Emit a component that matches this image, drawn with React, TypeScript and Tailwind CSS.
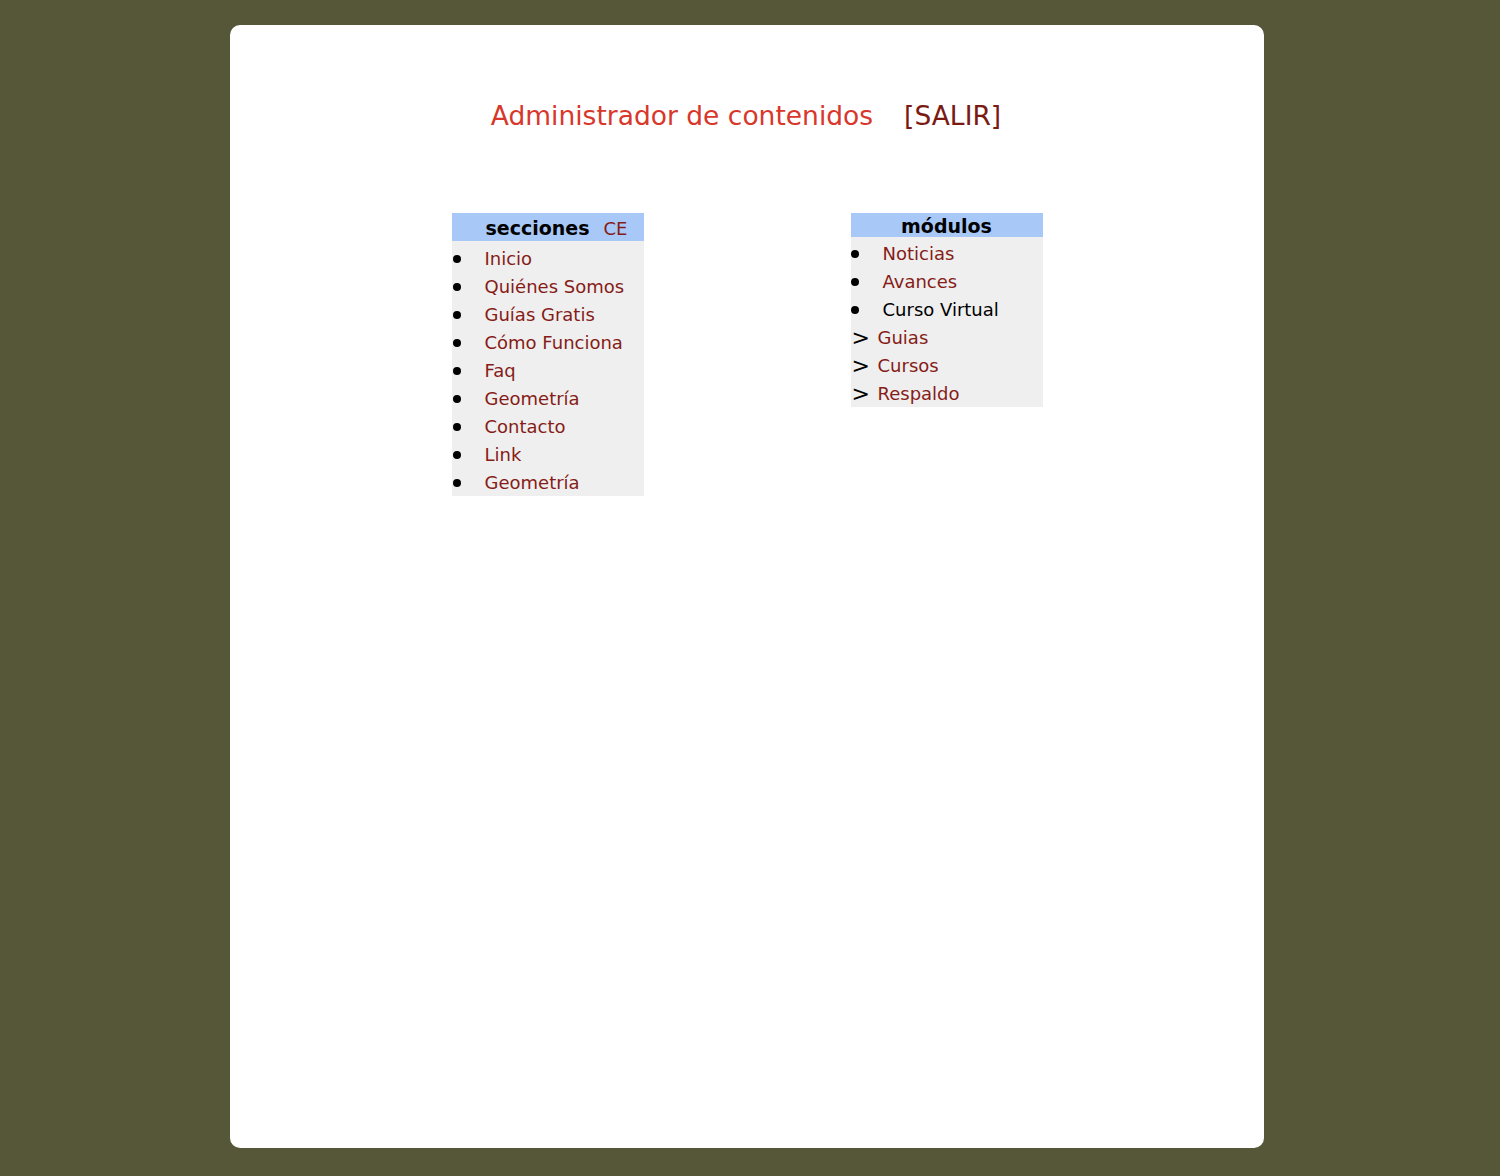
import React from "react";

const font = { fontFamily: '"DejaVu Sans", Verdana, sans-serif' };

function Bullet() {
  return <span className="inline-block w-[8px] h-[8px] rounded-full bg-black" />;
}

export default function App() {
  const secciones = ["Inicio", "Quiénes Somos", "Guías Gratis", "Cómo Funciona", "Faq", "Geometría", "Contacto", "Link", "Geometría"];
  const modBullets: { t: string; c: string }[] = [
    { t: "Noticias", c: "text-[#861c17]" },
    { t: "Avances", c: "text-[#861c17]" },
    { t: "Curso Virtual", c: "text-black" },
  ];
  const modArrows = ["Guias", "Cursos", "Respaldo"];
  return (
    <div className="min-h-[1176px] bg-[#565739] pt-[25px] pb-[28px]" style={font}>
      <div className="w-[1034px] h-[1123px] bg-white rounded-[10px] ml-[230px] pt-[74px]">
        <div className="flex justify-center items-baseline gap-[31px] text-[26.5px] leading-[34px] pr-[2px]">
          <span className="text-[#d8372b]">Administrador de contenidos</span>
          <span className="text-[#7b1a13]">[SALIR]</span>
        </div>
        <div className="flex justify-center items-start gap-[207px] mt-[80px]">
          <div className="w-[192px] bg-[#efefef]">
            <div className="h-[28px] bg-[#a8c8f8] flex items-end pl-[34px] gap-[14px]">
              <span className="font-bold text-[19px] leading-[26px] text-black">secciones</span>
              <span className="text-[18px] leading-[24px] text-[#861c17]">CE</span>
            </div>
            <div className="pt-[3px]">
              {secciones.map((s, i) => (
                <div key={i} className="h-[28px] flex items-center text-[18px] pt-[1px]">
                  <span className="w-[32px] pl-[1px] flex items-center"><Bullet /></span>
                  <span className="text-[#861c17] pl-[1px]">{s}</span>
                </div>
              ))}
            </div>
          </div>
          <div className="w-[192px] bg-[#efefef]">
            <div className="h-[24px] bg-[#a8c8f8] flex items-center justify-center">
              <span className="font-bold text-[19px] leading-[24px] text-black pt-[1px]">módulos</span>
            </div>
            <div className="pt-[2px]">
              {modBullets.map((m, i) => (
                <div key={i} className="h-[28px] flex items-center text-[18px] pt-[1px]">
                  <span className="w-[32px] flex items-center"><Bullet /></span>
                  <span className={m.c}>{m.t}</span>
                </div>
              ))}
              {modArrows.map((m, i) => (
                <div key={i} className="h-[28px] flex items-center text-[18px] pt-[1px]">
                  <span className="w-[27px] pl-[1px] text-black text-[22px] leading-[28px]">&gt;</span>
                  <span className="text-[#861c17]">{m}</span>
                </div>
              ))}
            </div>
          </div>
        </div>
      </div>
    </div>
  );
}
